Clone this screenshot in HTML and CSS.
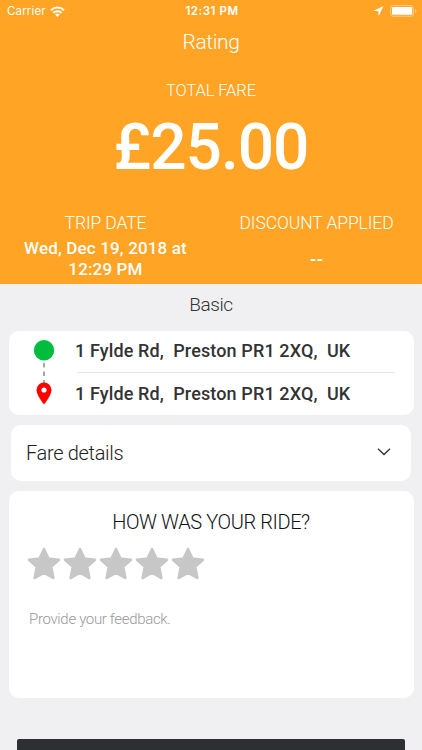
FILE: index.html
```html
<!DOCTYPE html>
<html lang="en">
<head>
<meta charset="utf-8">
<title>Rating</title>
<link rel="stylesheet" href="styles.css">
</head>
<body>
<main class="screen">
  <header class="hero">
    <div class="status">
      <div class="status-left"><span class="carrier">Carrier</span>
        <svg class="wifi" width="15" height="11" viewBox="0 0 15 11"><g fill="none" stroke="#fff" stroke-width="2"><path d="M1 4.200a9.200 9.200 0 0 1 13 0"/><path d="M3.400 6.900a5.800 5.800 0 0 1 8.200 0"/></g><path d="M5.200 8.600a3.300 3.300 0 0 1 4.600 0L7.500 11z" fill="#fff"/></svg>
      </div>
      <span class="clock">12:31 PM</span>
      <div class="status-right">
        <svg width="11" height="10" viewBox="0 0 11 10"><path d="M10.500 0 5.800 10 5.300 5.200.5 4.700z" fill="#fff"/></svg>
        <svg width="27" height="12" viewBox="0 0 27 12"><rect x=".6" y=".6" width="23" height="10.600" rx="2.400" fill="none" stroke="#fff" stroke-opacity=".45"/><rect x="2" y="2" width="20.200" height="7.800" rx="1" fill="#fff"/><path d="M25 4v4q1.500-.6 1.500-2T25 4" fill="#fff" fill-opacity=".45"/></svg>
      </div>
    </div>
    <h1 class="title"><span>Rating</span></h1>
    <div class="fare-label"><span>TOTAL FARE</span></div>
    <div class="fare"><span>£25.00</span></div>
    <div class="facts">
      <section class="fact"><h2><span>TRIP DATE</span></h2><p class="value"><span>Wed, Dec 19, 2018 at<br>12:29 PM</span></p></section>
      <section class="fact"><h2><span>DISCOUNT APPLIED</span></h2><p class="value none"><span>--</span></p></section>
    </div>
  </header>
  <div class="kind"><span>Basic</span></div>
  <section class="card route">
    <svg class="track" width="22" height="66" viewBox="0 0 22 66"><circle cx="11" cy="11.300" r="10.200" fill="#00bd3d"/><path d="M11 24v20" stroke="#999" stroke-width="1.700" stroke-dasharray="4.500 4"/><path d="M11 43.500a7.500 7.500 0 0 0-7.500 7.500c0 5.500 7.500 14.500 7.500 14.500s7.500-9 7.500-14.500a7.500 7.500 0 0 0-7.500-7.500z" fill="#fe0000"/><circle cx="11" cy="51" r="2.600" fill="#fff"/></svg>
    <div class="stops">
      <p class="stop"><span>1 Fylde Rd,&nbsp; Preston PR1 2XQ,&nbsp; UK</span></p>
      <div class="divider"></div>
      <p class="stop"><span>1 Fylde Rd,&nbsp; Preston PR1 2XQ,&nbsp; UK</span></p>
    </div>
  </section>
  <section class="card details"><span>Fare details</span>
    <svg width="14" height="9" viewBox="0 0 14 9"><path d="M1 .7 7 6.500l6-5.800" fill="none" stroke="#333" stroke-width="1.300"/></svg>
  </section>
  <section class="card feedback">
    <h2 class="question"><span>HOW WAS YOUR RIDE?</span></h2>
    <div class="stars">
      <svg viewBox="0 0 34 34"><path d="M17 2 21.400 11.500 32 12.700 24.200 19.900 26.400 31 17 25.600 7.600 31 9.800 19.900 2 12.700 12.600 11.500z"/></svg>
      <svg viewBox="0 0 34 34"><path d="M17 2 21.400 11.500 32 12.700 24.200 19.900 26.400 31 17 25.600 7.600 31 9.800 19.900 2 12.700 12.600 11.500z"/></svg>
      <svg viewBox="0 0 34 34"><path d="M17 2 21.400 11.500 32 12.700 24.200 19.900 26.400 31 17 25.600 7.600 31 9.800 19.900 2 12.700 12.600 11.500z"/></svg>
      <svg viewBox="0 0 34 34"><path d="M17 2 21.400 11.500 32 12.700 24.200 19.900 26.400 31 17 25.600 7.600 31 9.800 19.900 2 12.700 12.600 11.500z"/></svg>
      <svg viewBox="0 0 34 34"><path d="M17 2 21.400 11.500 32 12.700 24.200 19.900 26.400 31 17 25.600 7.600 31 9.800 19.900 2 12.700 12.600 11.500z"/></svg>
    </div>
    <p class="hint"><span>Provide your feedback.</span></p>
  </section>
  <div class="submit"></div>
</main>
</body>
</html>
```
FILE: styles.css
```css
* { box-sizing: border-box; }
body, h1, h2, p { margin: 0; font-weight: 300; }
body { font-family: Roboto, "Liberation Sans", sans-serif; }
svg { display: block; flex: none; }
.screen { width: 422px; height: 750px; overflow: hidden; background: #f0f0f2; display: flex; flex-direction: column; }
.hero { height: 284px; flex: none; background: #ffa424; color: #fff; text-align: center; }
.status { height: 22px; display: grid; grid-template-columns: 1fr auto 1fr; align-items: center; padding: 0 5px 0 7px; font-family: Inter, sans-serif; font-size: 11.5px; }
.status-left { display: flex; gap: 4px; align-items: center; }
.carrier { font-weight: 400; letter-spacing: .15px; }
.clock { font-weight: 600; letter-spacing: .55px; }
.status-right { display: flex; justify-content: flex-end; align-items: center; gap: 6px; }
.title { font-size: 21px; line-height: 41px; letter-spacing: -.4px; }
.fare-label { font-size: 16.5px; line-height: 20px; margin-top: 18px; letter-spacing: -.1px; }
.fare { font-size: 64px; line-height: 76px; font-weight: 500; margin-top: 9px; letter-spacing: -1px; }
.facts { display: grid; grid-template-columns: 1fr 1fr; margin-top: 27px; }
.fact h2 { font-size: 17.5px; line-height: 20px; letter-spacing: -.1px; }
.fact .value { height: 44px; margin-top: 4px; display: flex; align-items: center; justify-content: center; font-size: 17px; line-height: 21px; font-weight: 500; letter-spacing: .15px; }
.fact .none { font-weight: 700; }
.kind { height: 42px; line-height: 42px; text-align: center; font-size: 19px; letter-spacing: -.45px; color: #333; }
.card { flex: none; background: #fff; border-radius: 10px; }
.route { height: 83.5px; margin: 5px 8.5px 0 8.5px; padding: 8px 19px 0 24.5px; display: flex; gap: 20px; }
.stops { flex: 1; }
.stop { height: 33px; font-size: 18px; line-height: 24px; font-weight: 500; letter-spacing: .13px; color: #333; white-space: nowrap; }
.divider { height: 1px; margin: 0 0 9px 2px; background: #e4e4e4; }
.stop:first-child { height: 33px; }
.details { height: 56px; margin: 10px 11px 0 11px; padding: 0 20.5px 0 15px; display: flex; align-items: center; justify-content: space-between; font-size: 20px; letter-spacing: -.33px; color: #222; }
.feedback { height: 207.5px; margin: 10px 8.5px 0 8.5px; padding-top: 19.5px; }
.question { text-align: center; font-size: 20px; line-height: 25px; letter-spacing: -.4px; color: #111; }
.stars { display: flex; gap: 2px; padding-left: 18px; margin-top: 12px; }
.stars svg { width: 34px; height: 34px; fill: #c7c7c7; stroke: #c7c7c7; stroke-width: 2.6; stroke-linejoin: round; }
.hint { margin: 28px 0 0 20.5px; font-size: 15px; line-height: 20px; letter-spacing: -.33px; color: #999; }
.submit { flex: none; height: 20px; margin: 41px 17px 0 16.5px; background: #2d3033; border-radius: 2px 2px 0 0; }
```
